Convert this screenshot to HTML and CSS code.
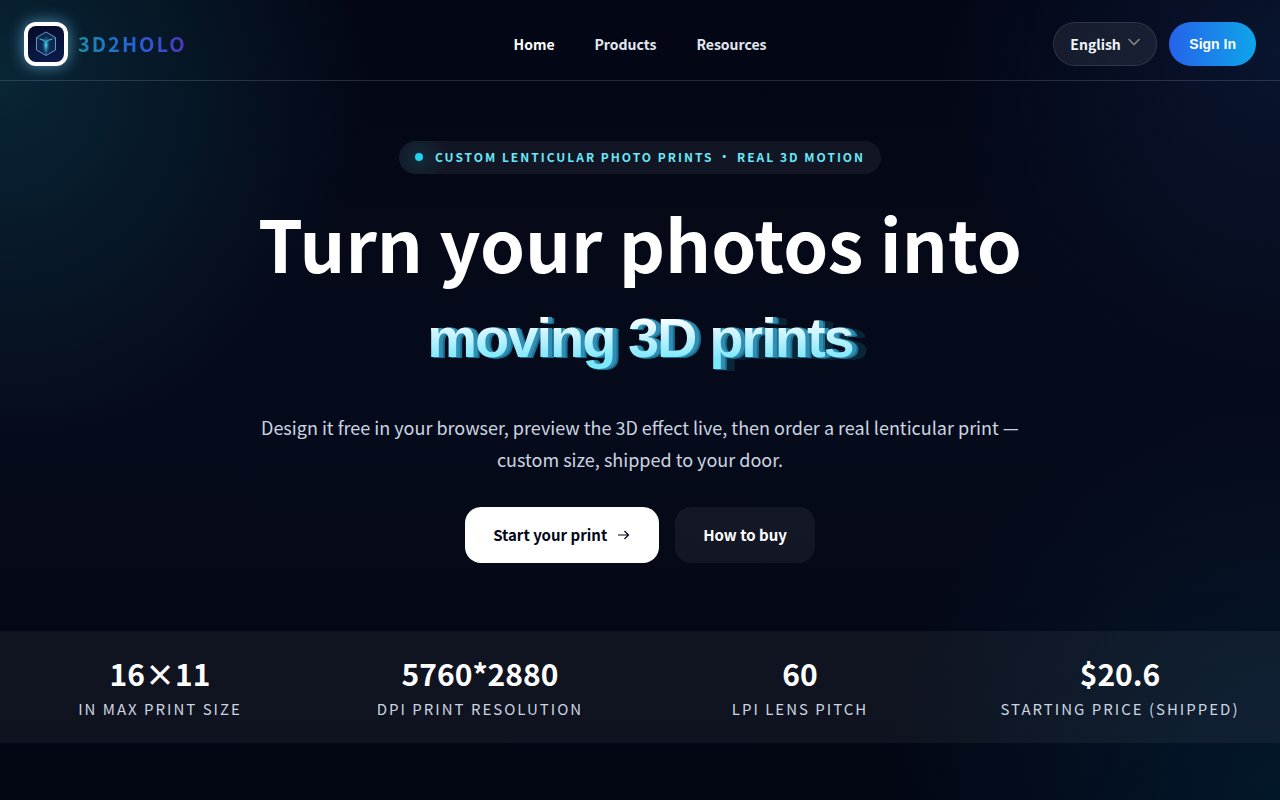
FILE: index.html
```html
<!DOCTYPE html>
<html lang="en">
<head>
<meta charset="UTF-8">
<meta name="viewport" content="width=device-width, initial-scale=1.0">
<title>3D2HOLO</title>
<link rel="stylesheet" href="styles.css">
</head>
<body>

<header class="site-header">
  <a class="brand" href="#">
    <span class="brand-icon">
      <svg viewBox="0 0 36 36" width="36" height="36" aria-hidden="true">
        <defs>
          <radialGradient id="beam">
            <stop offset="0" stop-color="#4fe3f5"/>
            <stop offset="1" stop-color="#1a6f9c" stop-opacity="0"/>
          </radialGradient>
        </defs>
        <path d="M18 6 27.500 11.500v12.500L18 29.500 8.500 24V11.500z" fill="#1b5b86" fill-opacity=".3" stroke="#6fa6cf" stroke-width=".9"/>
        <path d="M8.500 11.500 18 16l9.500-4.500M18 16v13" fill="none" stroke="#3d87b0" stroke-width=".7"/>
        <ellipse cx="18" cy="19" rx="4" ry="10" fill="url(#beam)"/>
        <path d="M12 13q5 1 6 3 1-2 6-3" fill="none" stroke="#3fb4cc"/>
      </svg>
    </span>
    <span class="brand-name">3D2HOLO</span>
  </a>

  <nav class="main-nav">
    <a class="active" href="#">Home</a>
    <a href="#products">Products</a>
    <a href="#resources">Resources</a>
  </nav>

  <div class="header-actions">
    <div class="language">
      <select class="language-select" aria-label="Language">
        <option>English</option>
      </select>
      <svg class="chevron" viewBox="0 0 14 14" width="14" height="14" aria-hidden="true">
        <path d="M1.500 4 7 9.500 12.500 4" fill="none" stroke="currentColor" stroke-width="1.600"/>
      </svg>
    </div>
    <button class="sign-in" type="button">Sign In</button>
  </div>
</header>

<main>
  <section class="hero">
    <p class="badge"><span class="dot"></span>Custom lenticular photo prints • Real 3D motion</p>
    <h1>
      <span class="title-line">Turn your photos into</span>
      <span class="title-3d"><span>moving</span> <span>3D</span> <span class="ghost">prints</span></span>
    </h1>
    <p class="lead">Design it free in your browser, preview the 3D effect live, then order a real lenticular print — custom size, shipped to your door.</p>
    <div class="cta">
      <a class="btn btn-primary" href="#start">Start your print
        <svg viewBox="0 0 14 14" width="14" height="14" aria-hidden="true">
          <path d="M1 7h10.500M7.500 3l4 4-4 4" fill="none" stroke="currentColor" stroke-width="1.200"/>
        </svg>
      </a>
      <a class="btn btn-ghost" href="#how">How to buy</a>
    </div>
  </section>

  <dl class="stats">
    <div class="stat"><dd>16×11</dd><dt>in max print size</dt></div>
    <div class="stat"><dd>5760*2880</dd><dt>DPI print resolution</dt></div>
    <div class="stat"><dd>60</dd><dt>LPI lens pitch</dt></div>
    <div class="stat"><dd>$20.6</dd><dt>Starting price (shipped)</dt></div>
  </dl>
</main>

</body>
</html>
```
FILE: styles.css
```css
* {
  box-sizing: border-box;
}
body {
  margin: 0;
  min-height: 100vh;
  font-family: "Noto Sans CJK SC", sans-serif;
  font-size: 15px;
  line-height: 24px;
  color: #fff;
  background:
    radial-gradient(circle at 0 9%, rgba(24, 128, 150, 0.25), transparent 370px),
    radial-gradient(circle at 100% 6%, rgba(30, 75, 150, 0.2), transparent 340px),
    radial-gradient(circle at 100% 100%, rgba(2, 100, 150, 0.18), transparent 400px),
    linear-gradient(#030614, #060b1b 50%, #030613);
}
a {
  color: inherit;
  text-decoration: none;
}

/* header */
.site-header {
  display: grid;
  grid-template-columns: 1fr auto 1fr;
  align-items: center;
  padding: 22px 24px 14px;
  border-bottom: 1px solid rgba(255, 255, 255, 0.14);
}
.brand {
  display: flex;
  align-items: center;
  gap: 10px;
}
.brand-icon {
  display: grid;
  padding: 4px;
  border-radius: 12px;
  background: #fff;
  box-shadow: 0 0 16px rgba(110, 190, 235, 0.7);
}
.brand-icon svg {
  border-radius: 8px;
  background: linear-gradient(160deg, #050b26, #0b1d4e);
}
.brand-name {
  font-size: 20px;
  font-weight: 700;
  letter-spacing: 2px;
  background: linear-gradient(90deg, #1b8ba8, #2563d9 50%, #5036b8);
  -webkit-background-clip: text;
  background-clip: text;
  color: transparent;
}
.main-nav {
  display: flex;
  gap: 40px;
  font-size: 14px;
  font-weight: 700;
  color: #e2e8f0;
}
.main-nav .active {
  color: #fff;
}
.header-actions {
  display: flex;
  justify-content: flex-end;
  gap: 12px;
}
.language {
  position: relative;
}
.language-select {
  appearance: none;
  height: 44px;
  padding: 0 35px 0 16px;
  border: 1px solid rgba(255, 255, 255, 0.1);
  border-radius: 22px;
  background: rgba(255, 255, 255, 0.07);
  color: #f1f5f9;
  font: inherit;
  font-size: 14px;
  font-weight: 700;
}
.chevron {
  position: absolute;
  top: 13px;
  right: 16px;
  color: #858585;
  pointer-events: none;
}
.sign-in {
  height: 44px;
  padding: 0 20px;
  border: 0;
  border-radius: 22px;
  background: linear-gradient(90deg, #2563eb, #0ea5e9);
  color: #fff;
  font: 700 14px "Liberation Sans", Arial, sans-serif;
}

/* hero */
.hero {
  display: flex;
  flex-direction: column;
  align-items: center;
  padding: 60px 24px 68px;
  text-align: center;
}
.badge {
  display: flex;
  align-items: center;
  gap: 12px;
  margin: 0;
  padding: 4px 16px 5px;
  border-radius: 17px;
  background: radial-gradient(circle at 20px 50%, rgba(34, 211, 238, 0.1), transparent 28px), rgba(255, 255, 255, 0.06);
  color: #67e8f9;
  font-size: 12px;
  font-weight: 700;
  letter-spacing: 2px;
  text-transform: uppercase;
}
.dot {
  width: 8px;
  height: 8px;
  border-radius: 50%;
  background: #22d3ee;
}
h1 {
  display: flex;
  flex-direction: column;
  align-items: center;
  margin: 28px 0 0;
  font-size: 72px;
  line-height: 80px;
  font-weight: 700;
}
.title-3d {
  margin-top: 20px;
  font-family: "Liberation Sans", Arial, sans-serif;
  font-size: 56px;
  line-height: 72px;
  letter-spacing: -2px;
}
.title-3d span {
  display: inline-block;
  padding-right: 2px;
  margin-right: -2px;
  background: linear-gradient(#fff 20%, #c9f4ff 45%, #7be8fb 80%);
  -webkit-background-clip: text;
  background-clip: text;
  color: transparent;
  filter: drop-shadow(2px 0 0 #2f8fb5) drop-shadow(2px 0 0 #2f8fb5) drop-shadow(2px 1px 0 #1d6f92);
}
.title-3d .ghost {
  filter: drop-shadow(2px 0 0 #2f8fb5) drop-shadow(2px 0 0 #2f8fb5) drop-shadow(2px 1px 0 #1d6f92) drop-shadow(8px 1px 0 #0a2536);
}
.lead {
  max-width: 768px;
  margin: 37px 0 0;
  font-size: 18px;
  line-height: 32px;
  color: #cbd5e1;
}
.cta {
  display: flex;
  gap: 16px;
  margin-top: 32px;
}
.btn {
  display: flex;
  align-items: center;
  gap: 10px;
  padding: 16px 28px;
  border-radius: 16px;
  font-weight: 700;
}
.btn-primary {
  background: #fff;
  color: #020617;
}
.btn-ghost {
  background: rgba(255, 255, 255, 0.06);
}

/* stats */
.stats {
  display: grid;
  grid-template-columns: repeat(4, 1fr);
  margin: 0;
  padding: 24px 0;
  background: rgba(255, 255, 255, 0.05);
  text-align: center;
}
.stat dd {
  margin: 0 0 8px;
  font-size: 30px;
  line-height: 36px;
  font-weight: 700;
}
.stat dt {
  line-height: 20px;
  color: #cbd5e1;
  letter-spacing: 2px;
  text-transform: uppercase;
}
```
